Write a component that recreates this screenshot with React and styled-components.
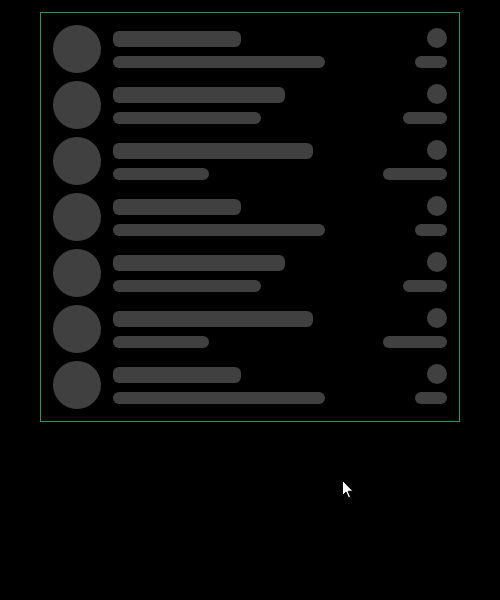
import React from 'react';
import styled, { createGlobalStyle } from 'styled-components';

const GlobalStyle = createGlobalStyle`
  html, body {
    margin: 0;
    padding: 0;
    background: #000;
    font-family: "Liberation Sans", Arial, sans-serif;
  }
`;

const Page = styled.div`
  position: relative;
  width: 500px;
  height: 600px;
  padding: 12px 40px;
  box-sizing: border-box;
  background: #000;
`;

const ListCard = styled.div`
  width: 420px;
  box-sizing: border-box;
  border: 1px solid #1f9b55;
  padding: 12px;
  display: flex;
  flex-direction: column;
  gap: 8px;
`;

const Row = styled.div`
  display: flex;
  align-items: flex-start;
  height: 48px;
`;

const Avatar = styled.div`
  width: 48px;
  height: 48px;
  border-radius: 50%;
  background: #404040;
  flex-shrink: 0;
`;

const TextCol = styled.div`
  display: flex;
  flex-direction: column;
  gap: 9px;
  padding-top: 6px;
  margin-left: 12px;
  flex: 1;
`;

const Bar = styled.div`
  height: ${p => p.$h}px;
  width: ${p => p.$w}px;
  border-radius: 6px;
  background: #404040;
`;

const MetaCol = styled.div`
  display: flex;
  flex-direction: column;
  align-items: flex-end;
  gap: 8px;
  padding-top: 3px;
`;

const Dot = styled.div`
  width: 20px;
  height: 20px;
  border-radius: 50%;
  background: #404040;
`;

const Cursor = styled.svg`
  position: absolute;
  left: 342px;
  top: 480px;
`;

const widths = [
  { title: 128, sub: 212, meta: 32 },
  { title: 172, sub: 148, meta: 44 },
  { title: 200, sub: 96, meta: 64 },
];

const rows = Array.from({ length: 7 }, (_, i) => widths[i % 3]);

const App = () => (
  <Page>
    <GlobalStyle />
    <ListCard>
      {rows.map((r, i) => (
        <Row key={i}>
          <Avatar />
          <TextCol>
            <Bar $h={16} $w={r.title} />
            <Bar $h={12} $w={r.sub} />
          </TextCol>
          <MetaCol>
            <Dot />
            <Bar $h={12} $w={r.meta} />
          </MetaCol>
        </Row>
      ))}
    </ListCard>
    <Cursor width="13" height="20" viewBox="0 0 13 20">
      <path
        d="M0.5 0.5 L0.5 15.5 L4 12 L6.5 17.8 L8.6 16.9 L6.2 11.3 L11 11.3 Z"
        fill="#fff"
        stroke="#000"
        strokeWidth="1"
      />
    </Cursor>
  </Page>
);

export default App;
